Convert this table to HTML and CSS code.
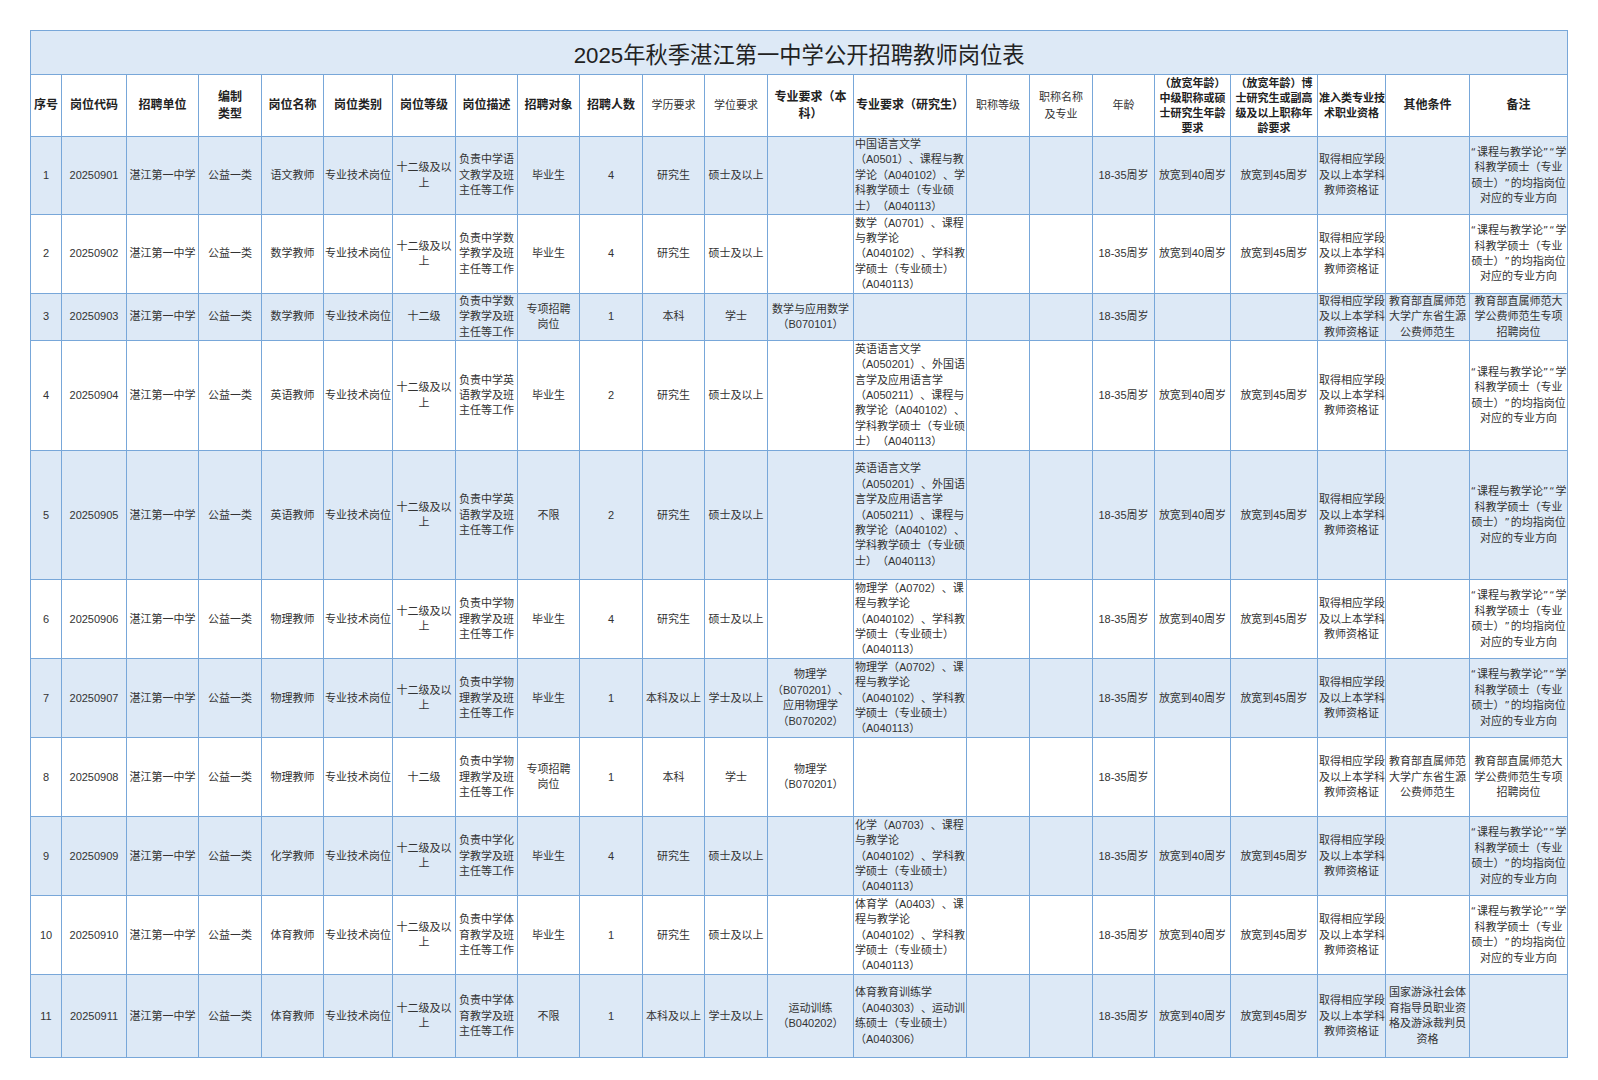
FILE: index.html
```html
<!DOCTYPE html>
<html lang="zh-CN">
<head>
<meta charset="utf-8">
<title>2025年秋季湛江第一中学公开招聘教师岗位表</title>
<link rel="stylesheet" href="styles.css">
</head>
<body>
<div class="page">
<table class="grid">
<colgroup>
<col class="c1"><col class="c2"><col class="c3"><col class="c4"><col class="c5"><col class="c6"><col class="c7"><col class="c8"><col class="c9"><col class="c10"><col class="c11"><col class="c12"><col class="c13"><col class="c14"><col class="c15"><col class="c16"><col class="c17"><col class="c18"><col class="c19"><col class="c20"><col class="c21"><col class="c22">
</colgroup>
<thead>
<tr class="title-row"><th colspan="22" class="title">2025年秋季湛江第一中学公开招聘教师岗位表</th></tr>
<tr class="head-row">
<th>序号</th><th>岗位代码</th><th>招聘单位</th><th>编制<br>类型</th><th>岗位名称</th><th>岗位类别</th><th>岗位等级</th><th>岗位描述</th><th>招聘对象</th><th>招聘人数</th>
<th class="lite">学历要求</th><th class="lite">学位要求</th><th>专业要求（本<br>科）</th><th>专业要求（研究生）</th><th class="lite">职称等级</th><th class="lite">职称名称<br>及专业</th><th class="lite">年龄</th>
<th class="small">（放宽年龄）<br>中级职称或硕<br>士研究生年龄<br>要求</th><th class="small">（放宽年龄）博<br>士研究生或副高<br>级及以上职称年<br>龄要求</th><th class="small">准入类专业技<br>术职业资格</th><th>其他条件</th><th>备注</th>
</tr>
</thead>
<tbody>
<tr class="blue r78">
<td>1</td><td>20250901</td><td>湛江第一中学</td><td>公益一类</td><td>语文教师</td><td>专业技术岗位</td><td>十二级及以<br>上</td><td>负责中学语<br>文教学及班<br>主任等工作</td><td>毕业生</td><td>4</td><td>研究生</td><td>硕士及以上</td><td></td>
<td>中国语言文学<br>（A0501）、课程与教<br>学论（A040102）、学<br>科教学硕士（专业硕<br>士）（A040113）</td><td></td><td></td><td>18-35周岁</td><td>放宽到40周岁</td><td>放宽到45周岁</td><td>取得相应学段<br>及以上本学科<br>教师资格证</td><td></td>
<td><span class="q">“</span>课程与教学论<span class="q">”“</span>学<br>科教学硕士（专业<br>硕士）<span class="q">”</span>的均指岗位<br>对应的专业方向</td>
</tr>
<tr class="r79">
<td>2</td><td>20250902</td><td>湛江第一中学</td><td>公益一类</td><td>数学教师</td><td>专业技术岗位</td><td>十二级及以<br>上</td><td>负责中学数<br>学教学及班<br>主任等工作</td><td>毕业生</td><td>4</td><td>研究生</td><td>硕士及以上</td><td></td>
<td>数学（A0701）、课程<br>与教学论<br>（A040102）、学科教<br>学硕士（专业硕士）<br>（A040113）</td><td></td><td></td><td>18-35周岁</td><td>放宽到40周岁</td><td>放宽到45周岁</td><td>取得相应学段<br>及以上本学科<br>教师资格证</td><td></td>
<td><span class="q">“</span>课程与教学论<span class="q">”“</span>学<br>科教学硕士（专业<br>硕士）<span class="q">”</span>的均指岗位<br>对应的专业方向</td>
</tr>
<tr class="blue r47">
<td>3</td><td>20250903</td><td>湛江第一中学</td><td>公益一类</td><td>数学教师</td><td>专业技术岗位</td><td>十二级</td><td>负责中学数<br>学教学及班<br>主任等工作</td><td>专项招聘<br>岗位</td><td>1</td><td>本科</td><td>学士</td><td>数学与应用数学<br>（B070101）</td>
<td></td><td></td><td></td><td>18-35周岁</td><td></td><td></td><td>取得相应学段<br>及以上本学科<br>教师资格证</td><td>教育部直属师范<br>大学广东省生源<br>公费师范生</td>
<td>教育部直属师范大<br>学公费师范生专项<br>招聘岗位</td>
</tr>
<tr class="r110">
<td>4</td><td>20250904</td><td>湛江第一中学</td><td>公益一类</td><td>英语教师</td><td>专业技术岗位</td><td>十二级及以<br>上</td><td>负责中学英<br>语教学及班<br>主任等工作</td><td>毕业生</td><td>2</td><td>研究生</td><td>硕士及以上</td><td></td>
<td>英语语言文学<br>（A050201）、外国语<br>言学及应用语言学<br>（A050211）、课程与<br>教学论（A040102）、<br>学科教学硕士（专业硕<br>士）（A040113）</td><td></td><td></td><td>18-35周岁</td><td>放宽到40周岁</td><td>放宽到45周岁</td><td>取得相应学段<br>及以上本学科<br>教师资格证</td><td></td>
<td><span class="q">“</span>课程与教学论<span class="q">”“</span>学<br>科教学硕士（专业<br>硕士）<span class="q">”</span>的均指岗位<br>对应的专业方向</td>
</tr>
<tr class="blue r129">
<td>5</td><td>20250905</td><td>湛江第一中学</td><td>公益一类</td><td>英语教师</td><td>专业技术岗位</td><td>十二级及以<br>上</td><td>负责中学英<br>语教学及班<br>主任等工作</td><td>不限</td><td>2</td><td>研究生</td><td>硕士及以上</td><td></td>
<td>英语语言文学<br>（A050201）、外国语<br>言学及应用语言学<br>（A050211）、课程与<br>教学论（A040102）、<br>学科教学硕士（专业硕<br>士）（A040113）</td><td></td><td></td><td>18-35周岁</td><td>放宽到40周岁</td><td>放宽到45周岁</td><td>取得相应学段<br>及以上本学科<br>教师资格证</td><td></td>
<td><span class="q">“</span>课程与教学论<span class="q">”“</span>学<br>科教学硕士（专业<br>硕士）<span class="q">”</span>的均指岗位<br>对应的专业方向</td>
</tr>
<tr class="r79">
<td>6</td><td>20250906</td><td>湛江第一中学</td><td>公益一类</td><td>物理教师</td><td>专业技术岗位</td><td>十二级及以<br>上</td><td>负责中学物<br>理教学及班<br>主任等工作</td><td>毕业生</td><td>4</td><td>研究生</td><td>硕士及以上</td><td></td>
<td>物理学（A0702）、课<br>程与教学论<br>（A040102）、学科教<br>学硕士（专业硕士）<br>（A040113）</td><td></td><td></td><td>18-35周岁</td><td>放宽到40周岁</td><td>放宽到45周岁</td><td>取得相应学段<br>及以上本学科<br>教师资格证</td><td></td>
<td><span class="q">“</span>课程与教学论<span class="q">”“</span>学<br>科教学硕士（专业<br>硕士）<span class="q">”</span>的均指岗位<br>对应的专业方向</td>
</tr>
<tr class="blue r79">
<td>7</td><td>20250907</td><td>湛江第一中学</td><td>公益一类</td><td>物理教师</td><td>专业技术岗位</td><td>十二级及以<br>上</td><td>负责中学物<br>理教学及班<br>主任等工作</td><td>毕业生</td><td>1</td><td>本科及以上</td><td>学士及以上</td><td>物理学<br>（B070201）、<br>应用物理学<br>（B070202）</td>
<td>物理学（A0702）、课<br>程与教学论<br>（A040102）、学科教<br>学硕士（专业硕士）<br>（A040113）</td><td></td><td></td><td>18-35周岁</td><td>放宽到40周岁</td><td>放宽到45周岁</td><td>取得相应学段<br>及以上本学科<br>教师资格证</td><td></td>
<td><span class="q">“</span>课程与教学论<span class="q">”“</span>学<br>科教学硕士（专业<br>硕士）<span class="q">”</span>的均指岗位<br>对应的专业方向</td>
</tr>
<tr class="r79">
<td>8</td><td>20250908</td><td>湛江第一中学</td><td>公益一类</td><td>物理教师</td><td>专业技术岗位</td><td>十二级</td><td>负责中学物<br>理教学及班<br>主任等工作</td><td>专项招聘<br>岗位</td><td>1</td><td>本科</td><td>学士</td><td>物理学<br>（B070201）</td>
<td></td><td></td><td></td><td>18-35周岁</td><td></td><td></td><td>取得相应学段<br>及以上本学科<br>教师资格证</td><td>教育部直属师范<br>大学广东省生源<br>公费师范生</td>
<td>教育部直属师范大<br>学公费师范生专项<br>招聘岗位</td>
</tr>
<tr class="blue r79">
<td>9</td><td>20250909</td><td>湛江第一中学</td><td>公益一类</td><td>化学教师</td><td>专业技术岗位</td><td>十二级及以<br>上</td><td>负责中学化<br>学教学及班<br>主任等工作</td><td>毕业生</td><td>4</td><td>研究生</td><td>硕士及以上</td><td></td>
<td>化学（A0703）、课程<br>与教学论<br>（A040102）、学科教<br>学硕士（专业硕士）<br>（A040113）</td><td></td><td></td><td>18-35周岁</td><td>放宽到40周岁</td><td>放宽到45周岁</td><td>取得相应学段<br>及以上本学科<br>教师资格证</td><td></td>
<td><span class="q">“</span>课程与教学论<span class="q">”“</span>学<br>科教学硕士（专业<br>硕士）<span class="q">”</span>的均指岗位<br>对应的专业方向</td>
</tr>
<tr class="r79">
<td>10</td><td>20250910</td><td>湛江第一中学</td><td>公益一类</td><td>体育教师</td><td>专业技术岗位</td><td>十二级及以<br>上</td><td>负责中学体<br>育教学及班<br>主任等工作</td><td>毕业生</td><td>1</td><td>研究生</td><td>硕士及以上</td><td></td>
<td>体育学（A0403）、课<br>程与教学论<br>（A040102）、学科教<br>学硕士（专业硕士）<br>（A040113）</td><td></td><td></td><td>18-35周岁</td><td>放宽到40周岁</td><td>放宽到45周岁</td><td>取得相应学段<br>及以上本学科<br>教师资格证</td><td></td>
<td><span class="q">“</span>课程与教学论<span class="q">”“</span>学<br>科教学硕士（专业<br>硕士）<span class="q">”</span>的均指岗位<br>对应的专业方向</td>
</tr>
<tr class="blue r83">
<td>11</td><td>20250911</td><td>湛江第一中学</td><td>公益一类</td><td>体育教师</td><td>专业技术岗位</td><td>十二级及以<br>上</td><td>负责中学体<br>育教学及班<br>主任等工作</td><td>不限</td><td>1</td><td>本科及以上</td><td>学士及以上</td><td>运动训练<br>（B040202）</td>
<td>体育教育训练学<br>（A040303）、运动训<br>练硕士（专业硕士）<br>（A040306）</td><td></td><td></td><td>18-35周岁</td><td>放宽到40周岁</td><td>放宽到45周岁</td><td>取得相应学段<br>及以上本学科<br>教师资格证</td><td>国家游泳社会体<br>育指导员职业资<br>格及游泳裁判员<br>资格</td>
<td></td>
</tr>
</tbody>
</table>
</div>
</body>
</html>
```
FILE: styles.css
```css
html, body {
  margin: 0;
  padding: 0;
  background: #ffffff;
}
body {
  font-family: "Liberation Sans", "Noto Sans CJK SC", sans-serif;
  color: #333333;
  text-spacing-trim: space-all;
}
.page {
  padding: 30px 0 0 30px;
}
.grid {
  border-collapse: collapse;
  table-layout: fixed;
  width: 1537px;
}
.grid th, .grid td {
  border: 1px solid #78a7d9;
  padding: 0 1px;
  text-align: center;
  vertical-align: middle;
  white-space: nowrap;
  overflow: visible;
}
.c1 { width: 31px; }
.c2 { width: 65px; }
.c3 { width: 72px; }
.c4 { width: 63px; }
.c5 { width: 62px; }
.c6 { width: 69px; }
.c7 { width: 63px; }
.c8 { width: 62px; }
.c9 { width: 62px; }
.c10 { width: 63px; }
.c11 { width: 62px; }
.c12 { width: 63px; }
.c13 { width: 86px; }
.c14 { width: 113px; }
.c15 { width: 63px; }
.c16 { width: 63px; }
.c17 { width: 62px; }
.c18 { width: 76px; }
.c19 { width: 87px; }
.c20 { width: 68px; }
.c21 { width: 84px; }
.c22 { width: 98px; }

.title-row { height: 44px; }
.title {
  background: #dde9f6;
  font-size: 22.3px;
  font-weight: normal;
  color: #222222;
  letter-spacing: 0;
}
.head-row { height: 62px; }
.head-row th {
  font-size: 12px;
  line-height: 17px;
  font-weight: bold;
  color: #222222;
  background: #ffffff;
}
.head-row th.lite {
  font-size: 11px;
  font-weight: normal;
  color: #333333;
}
.head-row th.small {
  font-size: 11px;
  line-height: 15px;
}
tbody td {
  font-size: 11px;
  line-height: 15.4px;
  background: #ffffff;
}
tbody tr.blue td {
  background: #dde9f6;
}
tbody td:nth-child(14) {
  text-align: left;
  padding: 0 0 0 1px;
}
tbody td:nth-child(22) {
  padding: 0;
}
.q {
  font-family: "DejaVu Sans", sans-serif;
  font-size: 10px;
  letter-spacing: 1px;
}
.r47 { height: 45px; }
.r78 { height: 77px; }
.r79 { height: 79px; }
.r83 { height: 83px; }
.r110 { height: 110px; }
.r129 { height: 129px; }
```
